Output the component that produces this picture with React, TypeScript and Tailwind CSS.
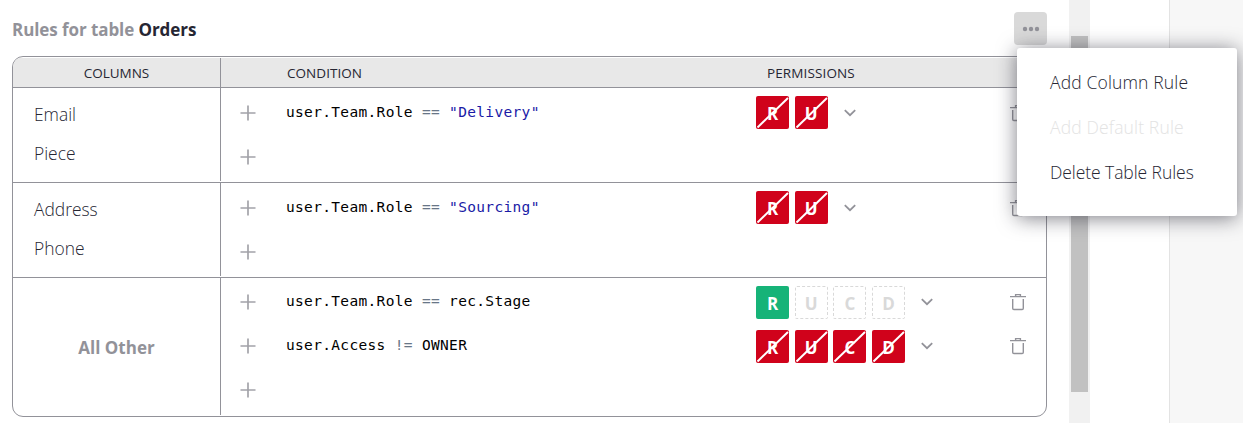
import React from 'react';

const SANS = "font-['Open_Sans','Noto_Sans',sans-serif]";
const MONO = "font-['DejaVu_Sans_Mono',monospace]";

type State = 'allow' | 'deny' | 'unset';
type Perm = [string, State];

function Plus() {
  return (
    <svg width="16" height="16" viewBox="0 0 16 16" fill="none" stroke="#929299" strokeOpacity=".85" strokeWidth="1.7">
      <path d="M8 .5v15M.5 8h15" />
    </svg>
  );
}

function Chevron() {
  return (
    <svg width="12" height="8" viewBox="0 0 12 8" fill="none" stroke="#929299" strokeWidth="1.8">
      <path d="M.8 1.2 6 6.2l5.200-5" />
    </svg>
  );
}

function Trash() {
  return (
    <svg width="16" height="18" viewBox="0 0 16 18" fill="none" stroke="#929299" strokeWidth="1.400">
      <path d="M0 3.600h16M5.600 3.500V1.600h4.800v1.900M2.700 6v9.300a1.200 1.200 0 0 0 1.200 1.200h8.200a1.200 1.200 0 0 0 1.200-1.200V6" />
    </svg>
  );
}

const tileStyle: Record<State, string> = {
  allow: 'bg-[#16b378] text-white',
  deny: 'bg-[#d0021b] text-white',
  unset: 'border border-dashed border-[#d9d9d9] text-[#d9d9d9]',
};

function Tile({ perm: [letter, state] }: { perm: Perm }) {
  return (
    <div className={`relative flex h-[33px] w-[33px] items-center justify-center rounded-[2px] pt-[2px] text-[17px] leading-none font-bold ${tileStyle[state]}`}>
      {letter}
      {state === 'deny' && (
        <svg className="absolute inset-0" width="33" height="33" stroke="#fff" strokeWidth="2">
          <path d="M1.500 31.500 32 2" />
        </svg>
      )}
    </div>
  );
}

function Rule({ children, perms }: { children?: React.ReactNode; perms?: Perm[] }) {
  return (
    <div className="flex h-[44px] items-center pl-[19px]">
      <div className="w-[46px]"><Plus /></div>
      <div className={`w-[470px] pb-[1px] text-[14.500px] leading-none tracking-[0.33px] whitespace-pre text-black ${MONO}`}>{children}</div>
      {perms && (
        <>
          <div className={`flex gap-[5.670px] ${perms.length > 2 ? 'pt-px' : 'pb-px'}`}>
            {perms.map((p) => <Tile key={p[0]} perm={p} />)}
          </div>
          <div className="ml-[16px]"><Chevron /></div>
          <div className="mr-[20px] ml-auto"><Trash /></div>
        </>
      )}
    </div>
  );
}

const Op = ({ children }: { children: string }) => <span className="text-[#687687]">{children}</span>;
const Str = ({ children }: { children: string }) => <span className="text-[#1a1aa6]">{children}</span>;

function Row({ left, top, children }: { left: React.ReactNode; top: string; children: React.ReactNode }) {
  return (
    <div className="flex flex-1 border-t border-[#929299] pb-[1px]">
      <div className="flex w-[208px] flex-col border-r border-[#929299]">{left}</div>
      <div className={`flex-1 ${top}`}>{children}</div>
    </div>
  );
}

function Names({ names }: { names: string[] }) {
  return (
    <div className="flex flex-col pt-[8px] pl-[21px] text-[17.400px] font-light text-[#262633]">
      {names.map((n) => <div key={n} className="h-[38.500px] leading-[37px]">{n}</div>)}
    </div>
  );
}

export default function App() {
  return (
    <div className={`relative flex h-[423px] w-[1243px] overflow-hidden bg-white ${SANS}`}>
      <main className="flex w-[1069px] flex-col pt-[12px] pl-[12px]">
        <div className="mb-[11px] flex h-[33px] w-[1035px] items-center justify-between">
          <h1 className="pt-[2px] text-[17px] leading-none font-bold tracking-[-0.08px] text-[#929299]">
            Rules for table <span className="text-[#262633]">Orders</span>
          </h1>
          <button className="flex h-[33px] w-[33px] items-center justify-center rounded-[4px] bg-[#d9d9d9]">
            <svg width="18" height="6" viewBox="0 0 18 6" fill="#929299">
              <circle cx="3" cy="3" r="2.200" /><circle cx="9" cy="3" r="2.200" /><circle cx="15" cy="3" r="2.200" />
            </svg>
          </button>
        </div>
        <section className="flex h-[361px] w-[1035px] flex-col overflow-hidden rounded-[11px] border border-[#929299] pt-[1px]">
          <div className="flex h-[29px] items-center bg-[#e8e8e8] text-[13.500px] leading-none font-medium text-[#262633]">
            <div className="flex h-full w-[208px] items-center justify-center border-r border-[#929299] pt-[2px] tracking-[-0.05px]">COLUMNS</div>
            <div className="w-[480px] pt-[2px] pl-[66px] tracking-[0.05px]">CONDITION</div>
            <div className="pt-[2px] pl-[66px] tracking-[0.12px]">PERMISSIONS</div>
          </div>
          <div className="flex h-[95px]">
            <Row left={<Names names={['Email', 'Piece']} />} top="pt-[3px]">
              <Rule perms={[['R', 'deny'], ['U', 'deny']]}>user.Team.Role <Op>==</Op> <Str>"Delivery"</Str></Rule>
              <Rule />
            </Row>
          </div>
          <div className="flex h-[95px]">
            <Row left={<Names names={['Address', 'Phone']} />} top="pt-[3px]">
              <Rule perms={[['R', 'deny'], ['U', 'deny']]}>user.Team.Role <Op>==</Op> <Str>"Sourcing"</Str></Rule>
              <Rule />
            </Row>
          </div>
          <div className="flex h-[139px]">
            <Row
              left={<div className="flex h-full items-center justify-center pt-[2px] text-[17px] font-bold text-[#929299]">All Other</div>}
              top="pt-[2px]"
            >
              <Rule perms={[['R', 'allow'], ['U', 'unset'], ['C', 'unset'], ['D', 'unset']]}>user.Team.Role <Op>==</Op> rec.Stage</Rule>
              <Rule perms={[['R', 'deny'], ['U', 'deny'], ['C', 'deny'], ['D', 'deny']]}>user.Access <Op>!=</Op> OWNER</Rule>
              <Rule />
            </Row>
          </div>
        </section>
      </main>
      <div className="w-[21px] bg-[#f1f1f1] pt-[36px] pl-[2px]">
        <div className="h-[356px] w-[17px] bg-[#c1c1c1]" />
      </div>
      <div className="w-[79px]" />
      <aside className="flex-1 border-l border-[#e3e3e3] bg-[#f7f7f7]" />
      <div className="absolute top-[48px] left-[1017px] h-[168px] w-[220px] rounded-[3px] bg-white pt-[12px] pl-[33px] text-[17.500px] font-light text-[#262633] shadow-[0_2px_20px_rgba(38,38,51,0.6)]">
        <div className="h-[45px] leading-[44px] tracking-[0.15px]">Add Column Rule</div>
        <div className="h-[45px] leading-[44px] tracking-[0.15px] text-[#e3e3e3]">Add Default Rule</div>
        <div className="h-[45px] leading-[44px] tracking-[-0.07px]">Delete Table Rules</div>
      </div>
    </div>
  );
}
